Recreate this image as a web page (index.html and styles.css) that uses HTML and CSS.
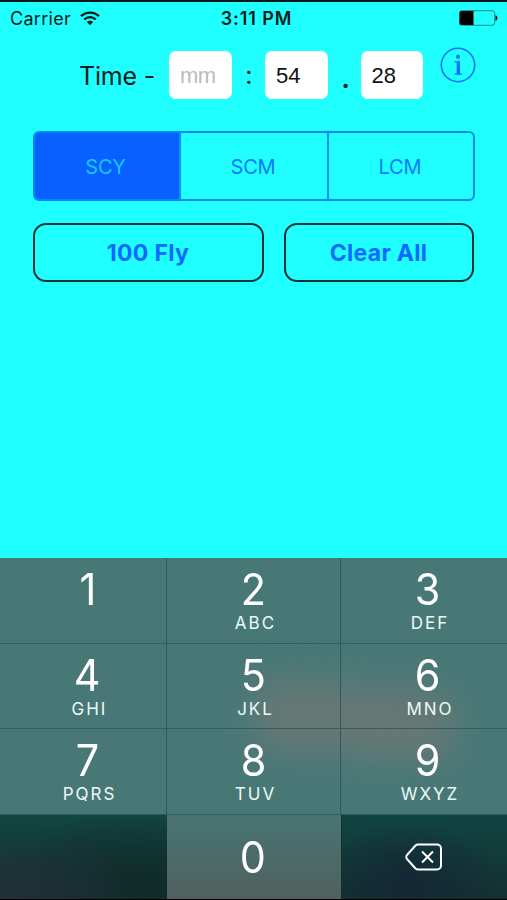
FILE: index.html
```html
<!DOCTYPE html>
<html lang="en">
<head>
<meta charset="utf-8">
<title>Swim Time Converter</title>
<link rel="stylesheet" href="styles.css">
</head>
<body>
<main class="app">
  <header class="status">
    <div class="carrier"><span>Carrier</span>
      <svg class="wifi" width="20" height="15" viewBox="0 0 20 15" fill="none" stroke="#041c1c" stroke-width="2.3"><path d="M1 5.2C6.1.3 13.9.3 19 5.2M4.2 8.5c3.4-3.2 8.2-3.2 11.6 0"/><path d="M6.8 11.1c1.9-1.7 4.5-1.7 6.4 0L10 14.3z" fill="#041c1c" stroke="none"/></svg>
    </div>
    <span class="clock">3:11 PM</span>
    <svg class="battery" width="39" height="16" viewBox="0 0 39 16"><rect x=".7" y=".7" width="35" height="14.6" rx="2.5" fill="none" stroke="#118c8c"/><path d="M2 1h12.500v14H2a1.500 1.500 0 0 1-1.500-1.500v-11A1.500 1.500 0 0 1 2 1z"/><path d="M36.500 5q2 1 2 3t-2 3z"/></svg>
  </header>
  <section class="time">
    <span class="time-label">Time -</span>
    <span class="field placeholder">mm</span>
    <span class="colon">:</span>
    <span class="field">54</span>
    <span class="dot">.</span>
    <span class="field">28</span>
    <svg class="info" width="36" height="36" viewBox="0 0 36 36"><circle cx="18" cy="18" r="16.700" fill="none" stroke="#0a72ff" stroke-width="1.600"/><circle cx="18" cy="9.700" r="2.100" fill="#0a72ff"/><path d="M14.500 14.300h5.500v12.200h2v1.300h-7.500v-1.300h2.200V15.600h-2.200z" fill="#0a72ff"/></svg>
  </section>
  <nav class="segments">
    <span class="segment selected">SCY</span>
    <span class="segment">SCM</span>
    <span class="segment">LCM</span>
  </nav>
  <div class="actions">
    <span class="action">100 Fly</span>
    <span class="action">Clear All</span>
  </div>
  <section class="keypad">
    <div class="key left"><b>1</b></div>
    <div class="key"><b>2</b><small>ABC</small></div>
    <div class="key right"><b>3</b><small>DEF</small></div>
    <div class="key left"><b>4</b><small>GHI</small></div>
    <div class="key"><b>5</b><small>JKL</small></div>
    <div class="key right"><b>6</b><small>MNO</small></div>
    <div class="key left"><b>7</b><small>PQRS</small></div>
    <div class="key"><b>8</b><small>TUV</small></div>
    <div class="key right"><b>9</b><small>WXYZ</small></div>
    <div class="key blank"></div>
    <div class="key zero"><b>0</b></div>
    <div class="key delete">
      <svg width="38" height="28" viewBox="0 0 38 28" fill="none" stroke="#fff" stroke-width="2" stroke-linejoin="round"><path d="M13 1.500h19a4 4 0 0 1 4 4v17a4 4 0 0 1-4 4H13q-1.500 0-2.500-1L2 16q-1.500-2 0-4l8.500-9.500q1-1 2.500-1z"/><path d="m17 8.500 11 11m0-11-11 11"/></svg>
    </div>
  </section>
</main>
</body>
</html>
```
FILE: styles.css
```css
* { box-sizing: border-box; }
body { margin: 0; font-family: Inter, "Liberation Sans", sans-serif; }
.app {
  width: 507px;
  height: 900px;
  display: flex;
  flex-direction: column;
  background: #20ffff;
  border-top: 2px solid #061818;
  border-bottom: 1px solid #000;
  overflow: hidden;
}
.status {
  height: 33px;
  flex: none;
  display: grid;
  grid-template-columns: 1fr auto 1fr;
  align-items: center;
  padding: 0 9px 0 10px;
  font-size: 18px;
  color: #041c1c;
}
.carrier { display: flex; align-items: center; gap: 9px; letter-spacing: 0.3px; }
.clock { font-weight: 600; letter-spacing: 0.9px; padding-left: 5px; }
.battery { justify-self: end; margin-top: -2px; }
.time { height: 96px; flex: none; display: flex; align-items: flex-start; padding: 16px 0 0 79px; color: #062020; }
.time-label { width: 90px; font-size: 25px; line-height: 50px; white-space: nowrap; letter-spacing: -0.2px; }
.field {
  width: 62.5px;
  height: 48px;
  border-radius: 7px;
  background: #fff;
  padding-left: 11px;
  font: 22px/49px "Liberation Sans", sans-serif;
  color: #111;
}
.placeholder { color: #bbb; letter-spacing: -0.5px; }
.colon, .dot { width: 33px; text-align: center; font-size: 25px; line-height: 48px; }
.colon { padding-left: 1px; width: 33.5px; }
.dot { padding-left: 3px; font-size: 32px; line-height: 52px; }
.info { margin: -4px 0 0 17px; }
.segments {
  height: 70px;
  flex: none;
  display: grid;
  grid-template-columns: 144px 148px 1fr;
  margin: 0 32px 0 33px;
  border: 2px solid #0888f8;
  border-radius: 6px;
  overflow: hidden;
  font-size: 20px;
  letter-spacing: -0.2px;
  color: #0878ff;
}
.segment { display: flex; align-items: center; justify-content: center; padding: 1px 2px 0 0; }
.segment + .segment { border-left: 2px solid #0c90fc; }
.segment.selected { background: #0860ff; color: #18c8ff; margin: -2px; padding: 1px 3px 0 0; }
.actions { display: grid; grid-template-columns: 231px 190px; gap: 20px; height: 59px; flex: none; margin: 22px 0 0 32.5px; }
.action {
  display: flex;
  align-items: center;
  justify-content: center;
  border: 2px solid #063434;
  border-radius: 13px;
  font-size: 23px;
  font-weight: 700;
  letter-spacing: 0.3px;
  color: #0868ff;
}
.keypad {
  height: 341px;
  flex: none;
  margin-top: auto;
  display: grid;
  grid-template-columns: 167px 174px 166px;
  grid-template-rows: 86px 85px 86px 84px;
  position: relative;
  isolation: isolate;
  overflow: hidden;
  background: #487876;
  color: #fff;
}
.keypad::before {
  content: "";
  position: absolute;
  z-index: -1;
  left: 255px;
  top: 127px;
  width: 200px;
  height: 70px;
  border-radius: 24px;
  background: #667875;
  transform: rotate(4deg);
  filter: blur(16px);
}
.key {
  display: flex;
  flex-direction: column;
  align-items: center;
  padding-top: 9px;
  border-right: 1px solid #2d5c5a;
  border-bottom: 1px solid #315f5d;
}
.key b { font-size: 44px; font-weight: 400; line-height: 44px; transform: scaleX(0.94); }
.key small { font-size: 17px; line-height: 20px; letter-spacing: 2px; margin: 2px 0 0 4px; color: #eef8f7; }
.left { padding-left: 9px; }
.right { padding-left: 8px; border-right: 0; }
.blank, .delete { border: 0; }
.blank { background: radial-gradient(ellipse at 0 100%, #243039, transparent 60%), radial-gradient(ellipse at 80% 85%, #102a29, transparent 75%), linear-gradient(#124640, #12312f); }
.zero { background: linear-gradient(#487472, #50615f); border: 0; padding: 20px 2px 0 0; }
.delete {
  justify-content: center;
  padding: 0 2px 0 0;
  background: radial-gradient(ellipse at 40% 85%, #132735, transparent 65%), linear-gradient(#104541, #152f31);
  border-left: 1px solid #12312f;
}
```
